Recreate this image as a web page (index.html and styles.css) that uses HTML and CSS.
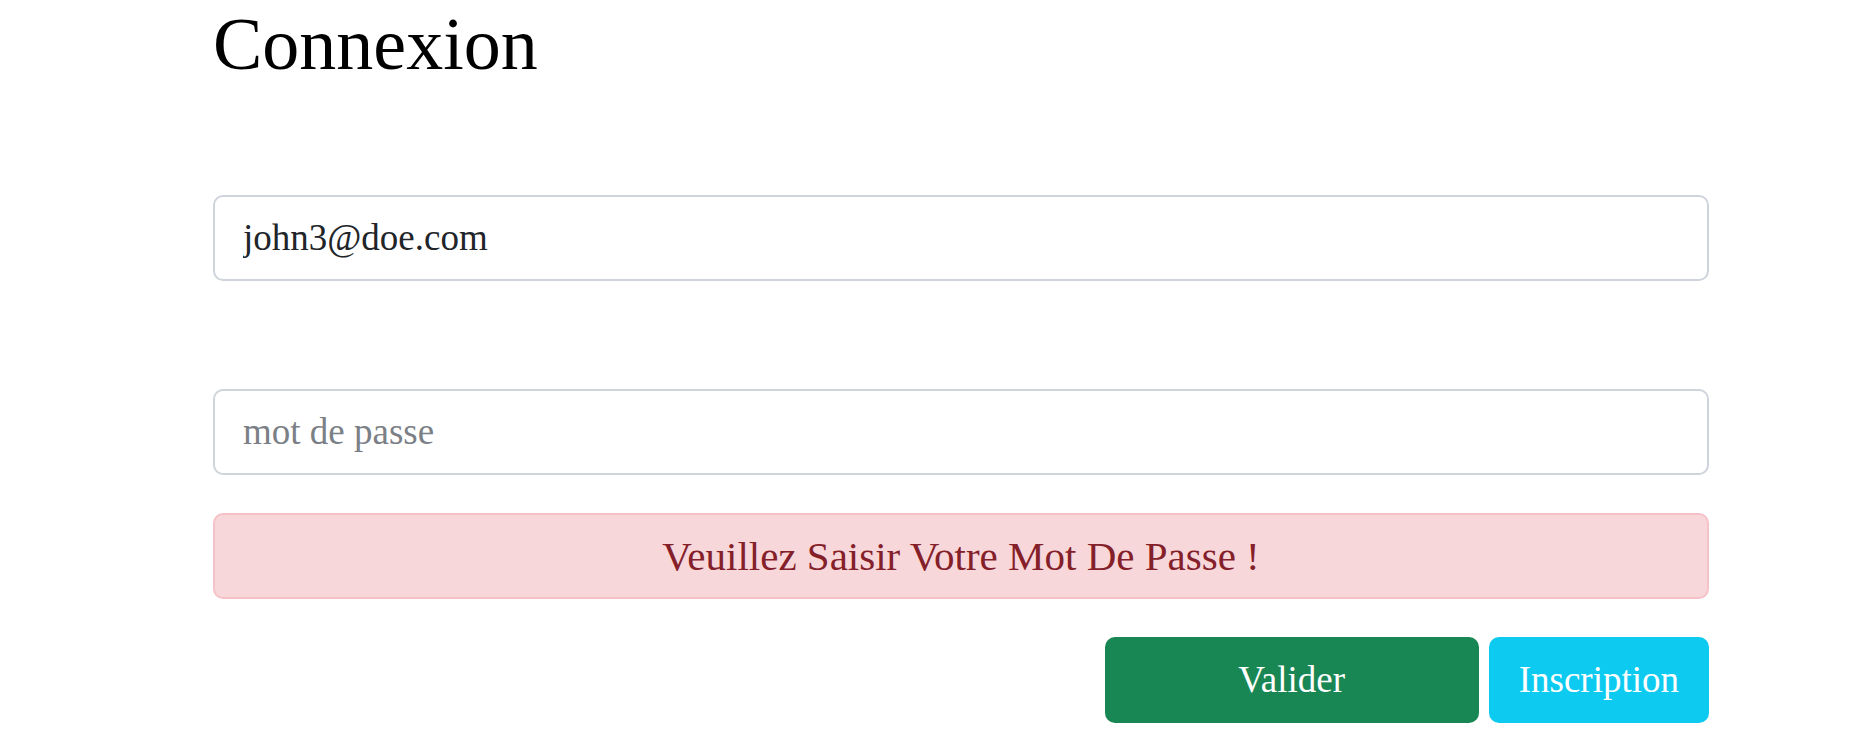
FILE: index.html
```html
<!DOCTYPE html>
<html lang="fr">
<head>
<meta charset="utf-8">
<title>Connexion</title>
<link rel="stylesheet" href="styles.css">
</head>
<body>
<main class="page">
  <h1 class="title">Connexion</h1>
  <form class="login-form">
    <input class="field field-email" type="email" value="john3@doe.com">
    <input class="field field-password" type="password" placeholder="mot de passe">
    <div class="alert">Veuillez Saisir Votre Mot De Passe !</div>
    <div class="actions">
      <button type="button" class="btn btn-validate">Valider</button>
      <button type="button" class="btn btn-signup">Inscription</button>
    </div>
  </form>
</main>
</body>
</html>
```
FILE: styles.css
```css
html, body {
  margin: 0;
  padding: 0;
  background: #ffffff;
}

body {
  font-family: "Liberation Serif", "Times New Roman", serif;
  color: #000000;
}

.page {
  padding-left: 213px;
  width: 1496px;
}

.title {
  margin: 0;
  font-size: 74px;
  font-weight: normal;
  line-height: 1.2;
}

.login-form {
  display: flex;
  flex-direction: column;
  margin-top: 106px;
}

.field {
  box-sizing: border-box;
  width: 100%;
  height: 86px;
  margin: 0;
  padding: 0 28px;
  border: 2px solid #cfd4dc;
  border-radius: 10px;
  font-family: "Liberation Serif", "Times New Roman", serif;
  font-size: 37px;
  color: #212529;
  background: #ffffff;
  outline: none;
}

.field::placeholder {
  color: #7b8086;
  opacity: 1;
}

.field-password {
  margin-top: 108px;
}

.alert {
  box-sizing: border-box;
  margin-top: 38px;
  height: 86px;
  display: flex;
  align-items: center;
  justify-content: center;
  background: #f8d7da;
  border: 2px solid #f5c2c7;
  border-radius: 10px;
  color: #842029;
  font-size: 41px;
}

.actions {
  margin-top: 38px;
  display: flex;
  justify-content: flex-end;
  gap: 10px;
}

.btn {
  box-sizing: border-box;
  height: 86px;
  border: none;
  border-radius: 10px;
  color: #ffffff;
  font-family: "Liberation Serif", "Times New Roman", serif;
  font-size: 37px;
  padding: 0 30px;
  cursor: pointer;
}

.btn-validate {
  width: 374px;
  background: #198754;
}

.btn-signup {
  background: #0dcaf0;
}
```
